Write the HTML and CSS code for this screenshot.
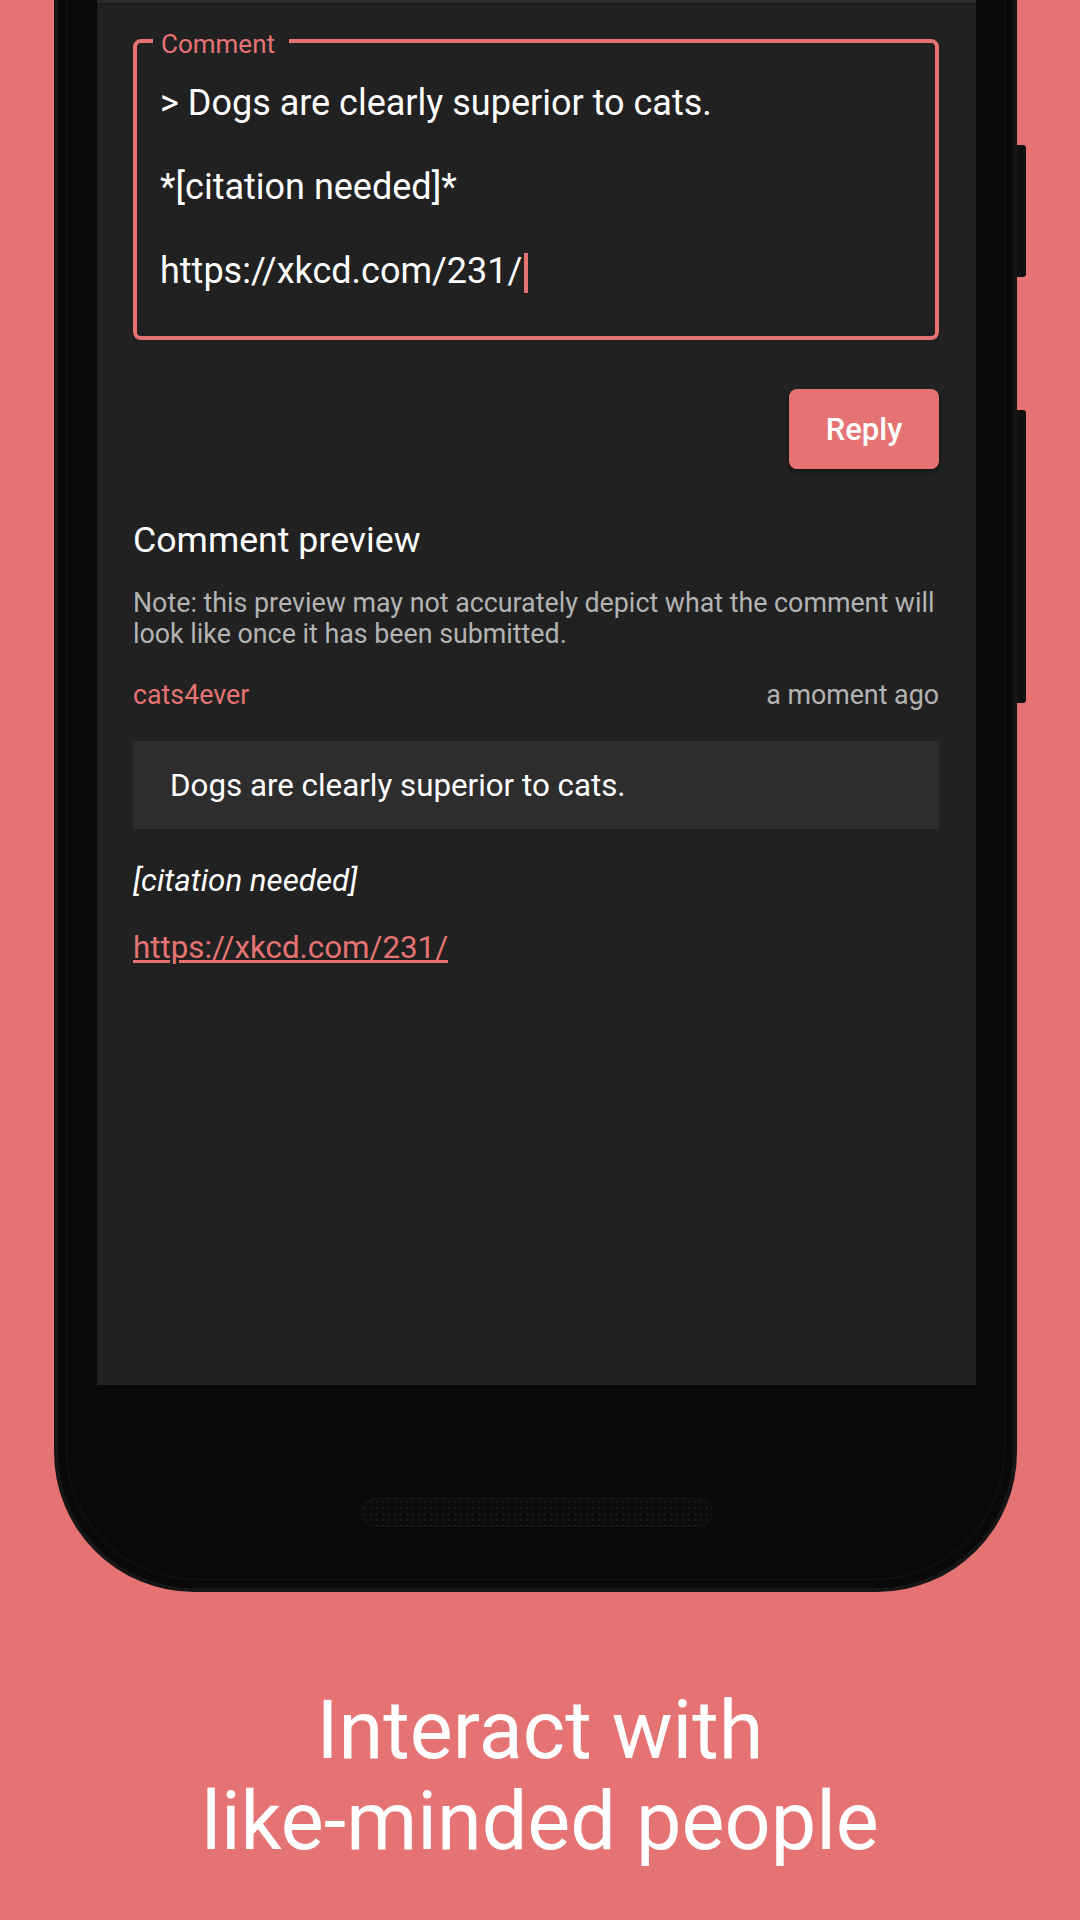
FILE: index.html
```html
<!DOCTYPE html>
<html lang="en">
<head>
<meta charset="utf-8">
<title>Interact with like-minded people</title>
<link rel="stylesheet" href="styles.css">
</head>
<body>
<main class="page">
  <div class="phone">
    <span class="side-btn side-btn--power"></span>
    <span class="side-btn side-btn--volume"></span>
    <div class="screen">
      <div class="appbar-edge"></div>
      <div class="content">
        <fieldset class="comment-field">
          <legend class="comment-label">Comment</legend>
          <div class="field-text">&gt; Dogs are clearly superior to cats.<br><br>*[citation needed]*<br><br>https://xkcd.com/231/<span class="caret"></span></div>
        </fieldset>
        <div class="actions">
          <button class="reply-btn" type="button">Reply</button>
        </div>
        <h2 class="preview-title">Comment preview</h2>
        <p class="preview-note">Note: this preview may not accurately depict what the comment will look like once it has been submitted.</p>
        <div class="comment-meta">
          <span class="author">cats4ever</span>
          <span class="time">a moment ago</span>
        </div>
        <blockquote class="quote">Dogs are clearly superior to cats.</blockquote>
        <p class="body-text body-text--first"><em>[citation needed]</em></p>
        <p class="body-text"><a class="link" href="#">https://xkcd.com/231/</a></p>
      </div>
    </div>
    <div class="chin">
      <div class="speaker"></div>
    </div>
  </div>
  <h1 class="caption">Interact with<br>like-minded people</h1>
</main>
</body>
</html>
```

FILE: styles.css
```css
* {
  box-sizing: border-box;
}

html, body {
  margin: 0;
  padding: 0;
  background: #e57373;
}

body {
  font-family: Roboto, "Liberation Sans", Arial, sans-serif;
  color: #ffffff;
}

.page {
  width: 1080px;
  height: 1920px;
  overflow: hidden;
  background: #e57373;
  display: flex;
  flex-direction: column;
}

/* ---------- phone frame ---------- */
.phone {
  position: relative;
  margin-left: 54px;
  width: 963px;
  height: 1592px;
  flex: none;
  background: #090909;
  border: 0 solid #161616;
  border-width: 0 4px 4px 4px;
  border-radius: 0 0 140px 140px;
  padding: 0 37px 0 39px;
  display: flex;
  flex-direction: column;
}

.phone::after {
  content: "";
  position: absolute;
  left: 8px;
  right: 8px;
  top: 0;
  bottom: 8px;
  border: 1px solid rgba(255, 255, 255, 0.05);
  border-top: none;
  border-radius: 0 0 130px 130px;
  pointer-events: none;
}

.side-btn {
  position: absolute;
  left: calc(100% + 4px);
  width: 9px;
  background: #111111;
  border-radius: 0 3px 3px 0;
}

.side-btn--power {
  top: 145px;
  height: 132px;
}

.side-btn--volume {
  top: 410px;
  height: 293px;
}

.screen {
  position: relative;
  z-index: 1;
  height: 1385px;
  flex: none;
  background: #212121;
  display: flex;
  flex-direction: column;
}

.appbar-edge {
  height: 3px;
  background: #2b2b2b;
  box-shadow: 0 1px 3px rgba(0, 0, 0, 0.35);
}

.content {
  padding: 0 37px 0 36px;
}

/* ---------- comment input ---------- */
.comment-field {
  margin: 20px 0 0;
  min-width: 0;
  border: 4px solid #e57373;
  border-radius: 8px;
  padding: 23px 23px 43px 23px;
}

.comment-label {
  margin-left: -7px;
  padding: 6px 14px 0 8px;
  font-size: 26px;
  line-height: 30px;
  color: #e57373;
}

.field-text {
  font-size: 36px;
  line-height: 42px;
  color: #ffffff;
}

.caret {
  display: inline-block;
  width: 4px;
  height: 40px;
  margin-left: 2px;
  vertical-align: -10px;
  background: #e57373;
}

/* ---------- actions ---------- */
.actions {
  display: flex;
  justify-content: flex-end;
  margin-top: 49px;
}

.reply-btn {
  width: 150px;
  height: 80px;
  border: 0;
  border-radius: 8px;
  background: #e57373;
  color: #ffffff;
  font-family: Roboto, "Liberation Sans", Arial, sans-serif;
  font-weight: 500;
  font-size: 31px;
  box-shadow: 0 2px 4px rgba(0, 0, 0, 0.45);
  padding: 0;
}

/* ---------- preview ---------- */
.preview-title {
  margin: 51px 0 0;
  font-size: 35.7px;
  line-height: 41px;
  font-weight: 400;
  color: #ffffff;
}

.preview-note {
  margin: 27px 0 0;
  font-size: 26.8px;
  line-height: 31px;
  color: #b3b3b3;
}

.comment-meta {
  margin-top: 30px;
  display: flex;
  justify-content: space-between;
  font-size: 26.8px;
  line-height: 31px;
}

.author {
  color: #e57373;
}

.time {
  color: #b3b3b3;
}

.quote {
  margin: 30px 0 0;
  background: #2d2d2d;
  padding: 27px 36px 25px 37px;
  font-size: 31.3px;
  line-height: 36px;
  color: #ffffff;
}

.body-text {
  margin: 31px 0 0;
  font-size: 31.3px;
  line-height: 36px;
  color: #ffffff;
}

.body-text--first {
  margin-top: 34px;
}

.link {
  color: #e57373;
  text-decoration: underline;
}

/* ---------- phone chin ---------- */
.chin {
  flex: 1;
  display: flex;
  justify-content: center;
  align-items: flex-start;
  padding-top: 113px;
}

.speaker {
  width: 352px;
  height: 29px;
  border-radius: 15px;
  background-color: #0c0c0c;
  background-image: radial-gradient(circle, #1b1b1b 1px, transparent 1.4px);
  background-size: 6px 6px;
  border: 1px solid #171717;
}

/* ---------- caption ---------- */
.caption {
  margin: 93px 0 0;
  text-align: center;
  font-size: 81px;
  line-height: 91px;
  font-weight: 400;
  color: #ffffff;
}
```
